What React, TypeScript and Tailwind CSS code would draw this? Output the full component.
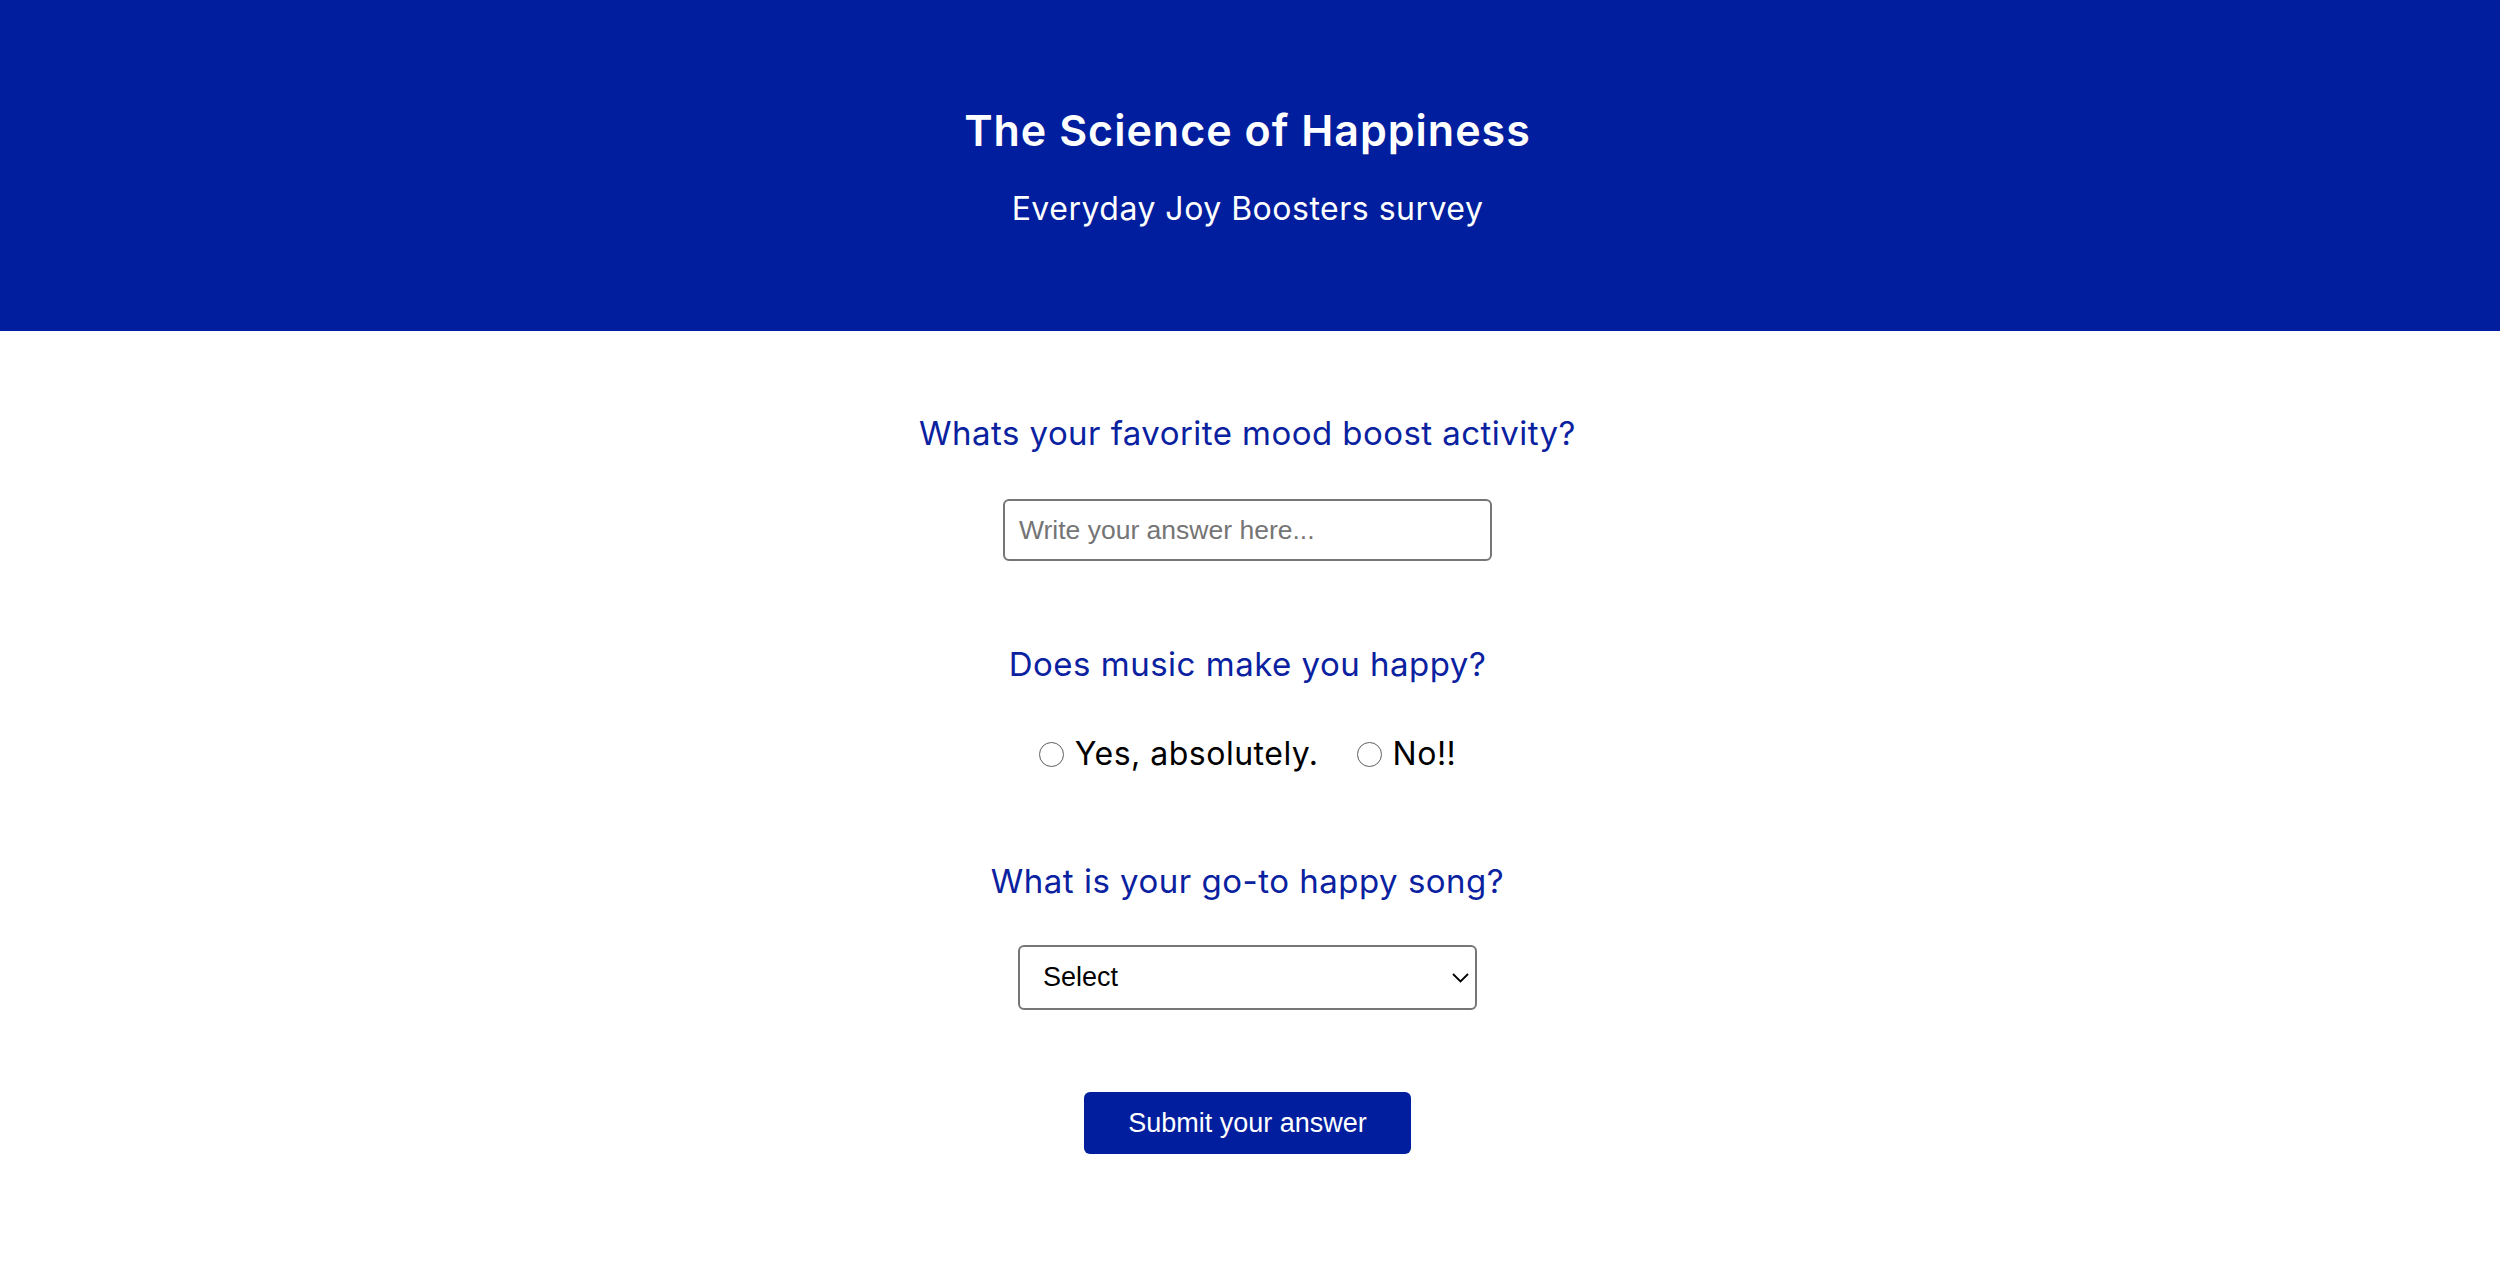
import React from "react";

const poppins = { fontFamily: "Inter, 'Open Sans', sans-serif" };

export default function App() {
  return (
    <div className="min-h-[1276px] w-full bg-white">
      <header className="h-[331px] w-full bg-[#001e9d] flex flex-col items-center pr-[5px] text-white" style={poppins}>
        <h1 className="mt-[109px] text-[43px] leading-none font-semibold tracking-[1px]">The Science of Happiness</h1>
        <p className="mt-[41px] text-[32px] leading-none font-normal tracking-[0.5px]">Everyday Joy Boosters survey</p>
      </header>
      <form className="flex flex-col items-center pr-[5px]" onSubmit={(e) => e.preventDefault()}>
        <label className="mt-[86px] text-[33px] leading-none tracking-[0.45px] text-[#0a21a0]" style={poppins}>
          Whats your favorite mood boost activity?
        </label>
        <input
          type="text"
          placeholder="Write your answer here..."
          className="mt-[49px] w-[489px] h-[62px] border-2 border-[#767676] rounded-[6px] pl-[14px] text-[26.5px] text-black placeholder:text-[#757575] outline-none"
          style={{ fontFamily: "'Liberation Sans', Arial, sans-serif" }}
        />
        <p className="mt-[87px] text-[33px] leading-none tracking-[0.5px] text-[#0a21a0]" style={poppins}>
          Does music make you happy?
        </p>
        <div className="mt-[57px] flex items-center gap-[38px] text-[32px] leading-none tracking-[0.5px] text-black" style={poppins}>
          <label className="flex items-center gap-[11px]">
            <input
              type="radio"
              name="music"
              className="appearance-none w-[25px] h-[25px] rounded-full border-[1.5px] border-[#5f5f5f] bg-white m-0"
            />
            <span>Yes, absolutely.</span>
          </label>
          <label className="flex items-center gap-[11px]">
            <input
              type="radio"
              name="music"
              className="appearance-none w-[25px] h-[25px] rounded-full border-[1.5px] border-[#5f5f5f] bg-white m-0"
            />
            <span>No!!</span>
          </label>
        </div>
        <p className="mt-[95px] text-[33px] leading-none tracking-[0.5px] text-[#0a21a0]" style={poppins}>
          What is your go-to happy song?
        </p>
        <div className="mt-[47px] relative w-[459px] h-[65px]">
          <select
            className="appearance-none w-full h-full border-2 border-[#767676] rounded-[6px] pl-[23px] text-[27px] text-black bg-white outline-none"
            style={{ fontFamily: "'Liberation Sans', Arial, sans-serif" }}
            defaultValue="select"
          >
            <option value="select">Select</option>
            <option value="1">Happy - Pharrell Williams</option>
            <option value="2">Don't Stop Me Now - Queen</option>
          </select>
          <svg
            className="absolute right-[8px] top-[28px] pointer-events-none"
            width="17"
            height="10"
            viewBox="0 0 17 10"
            fill="none"
          >
            <path d="M1 1l7.5 7.5L16 1" stroke="#000" strokeWidth="1.8" />
          </svg>
        </div>
        <button
          type="submit"
          className="mt-[82px] w-[327px] h-[62px] bg-[#001e9d] text-white rounded-[6px] text-[27px]"
          style={{ fontFamily: "'Liberation Sans', Arial, sans-serif" }}
        >
          Submit your answer
        </button>
      </form>
    </div>
  );
}
